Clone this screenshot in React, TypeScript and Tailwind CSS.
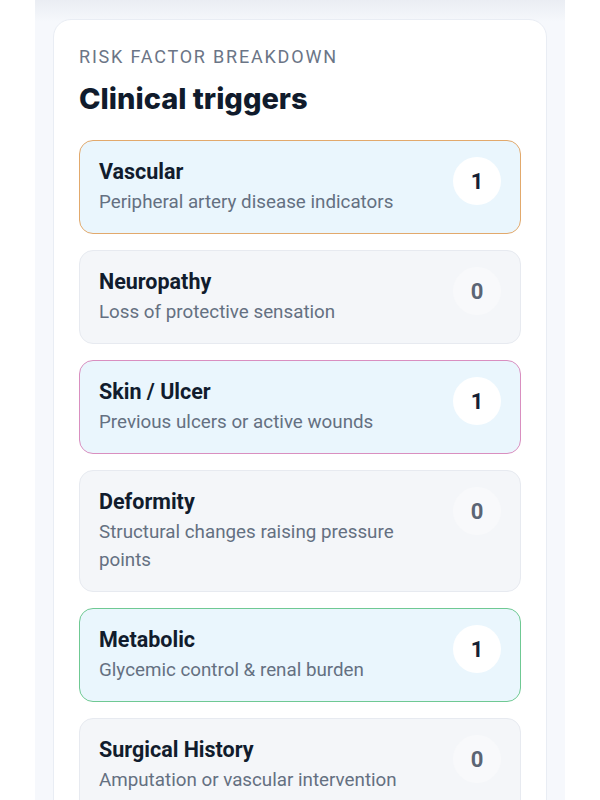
import React from 'react';

type Trigger = {
  name: string;
  desc: string;
  count: number;
  tone?: 'orange' | 'pink' | 'green';
};

const triggers: Trigger[] = [
  { name: 'Vascular', desc: 'Peripheral artery disease indicators', count: 1, tone: 'orange' },
  { name: 'Neuropathy', desc: 'Loss of protective sensation', count: 0 },
  { name: 'Skin / Ulcer', desc: 'Previous ulcers or active wounds', count: 1, tone: 'pink' },
  { name: 'Deformity', desc: 'Structural changes raising pressure points', count: 0 },
  { name: 'Metabolic', desc: 'Glycemic control & renal burden', count: 1, tone: 'green' },
  { name: 'Surgical History', desc: 'Amputation or vascular intervention history', count: 0 },
];

const toneBorder = {
  orange: 'border-[#e2a96c]',
  pink: 'border-[#d98fc0]',
  green: 'border-[#6fc993]',
};

const TriggerRow = ({ item }: { item: Trigger }) => {
  const active = item.count > 0 && item.tone;
  return (
    <div
      className={
        'flex items-start gap-4 rounded-[14px] border pl-[19px] pr-[19px] py-[17px] ' +
        (active ? `bg-[#eaf6fd] ${toneBorder[item.tone!]}` : 'bg-[#f4f6f9] border-[#e7eaf0]')
      }
    >
      <div className="flex-1 min-w-0">
        <div className="text-[21.5px] leading-[28px] font-bold text-[#111c2d]">{item.name}</div>
        <div className="mt-[2px] text-[18.8px] leading-[28px] text-[#647081]">{item.desc}</div>
      </div>
      <div
        className={
          'mt-[-1px] flex h-12 w-12 shrink-0 items-center justify-center rounded-full text-[22px] font-bold ' +
          (active ? 'bg-white text-[#152033]' : 'bg-[#f8f9fb] text-[#5b6574]')
        }
      >
        {item.count}
      </div>
    </div>
  );
};

export default function App() {
  return (
    <div className="min-h-[800px] bg-white font-['Roboto','Liberation_Sans',sans-serif]">
      <div className="mx-[35px] min-h-[800px] bg-[#f6f8fc] bg-gradient-to-b from-[#eaedf3] to-[#f6f8fc] bg-no-repeat [background-size:100%_22px] px-[18px] pt-[19px]">
        <div className="rounded-[18px] border border-[#e9edf4] bg-white px-[25px] pt-[26px] pb-8">
          <div className="text-[18px] leading-[22px] tracking-[0.1em] text-[#6b7586] uppercase">
            Risk factor breakdown
          </div>
          <h2 className="mt-[14px] font-['Inter',sans-serif] text-[29px] leading-[34px] font-extrabold text-[#101b2c]">
            Clinical triggers
          </h2>
          <div className="mt-6 flex flex-col gap-4">
            {triggers.map((t) => (
              <TriggerRow key={t.name} item={t} />
            ))}
          </div>
        </div>
      </div>
    </div>
  );
}
